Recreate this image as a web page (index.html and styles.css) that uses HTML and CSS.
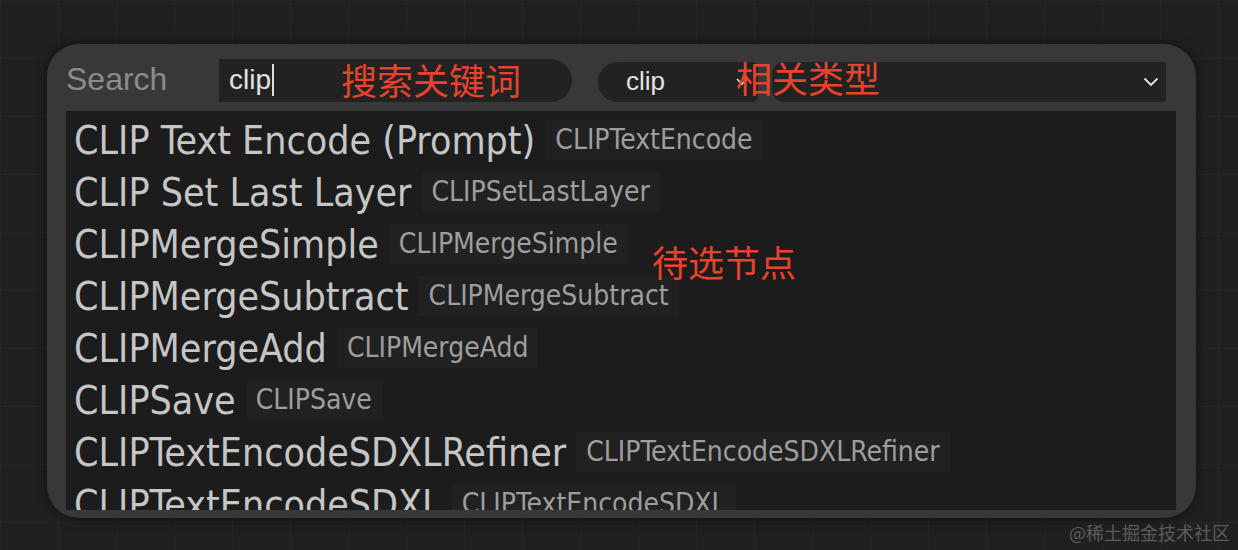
FILE: index.html
```html
<!DOCTYPE html>
<html lang="zh-CN">
<head>
    <meta charset="UTF-8">
    <title>Search</title>
    <link rel="stylesheet" href="styles.css">
</head>
<body>
    <div class="dialog">
        <div class="header">
            <span class="label">Search</span>
            <div class="input">
                <span class="value">clip</span><span class="caret"></span>
                <span class="note note-key">搜索关键词</span>
            </div>
            <div class="filter">
                <span class="value">clip</span>
                <svg class="mini" width="12" height="8" viewBox="0 0 12 8"><path d="M1 1l5 5 5-5" fill="none" stroke="#ddd" stroke-width="1.6"/></svg>
            </div>
            <div class="select">
                <svg width="16" height="10" viewBox="0 0 16 10"><path d="M1.5 1.5l6.5 6.5 6.5-6.5" fill="none" stroke="#e6e6e6" stroke-width="1.8"/></svg>
            </div>
            <span class="note note-type">相关类型</span>
        </div>
        <div class="list">
            <div class="item"><span class="name">CLIP Text Encode (Prompt)</span><span class="type">CLIPTextEncode</span></div>
            <div class="item"><span class="name">CLIP Set Last Layer</span><span class="type">CLIPSetLastLayer</span></div>
            <div class="item"><span class="name">CLIPMergeSimple</span><span class="type">CLIPMergeSimple</span></div>
            <div class="item"><span class="name">CLIPMergeSubtract</span><span class="type">CLIPMergeSubtract</span></div>
            <div class="item"><span class="name">CLIPMergeAdd</span><span class="type">CLIPMergeAdd</span></div>
            <div class="item"><span class="name">CLIPSave</span><span class="type">CLIPSave</span></div>
            <div class="item"><span class="name">CLIPTextEncodeSDXLRefiner</span><span class="type">CLIPTextEncodeSDXLRefiner</span></div>
            <div class="item"><span class="name">CLIPTextEncodeSDXL</span><span class="type">CLIPTextEncodeSDXL</span></div>
            <span class="note note-list">待选节点</span>
        </div>
    </div>
    <div class="mark">@稀土掘金技术社区</div>
</body>
</html>
```

FILE: styles.css
```css
body {
    margin: 0;
    width: 1238px;
    height: 550px;
    overflow: hidden;
    position: relative;
    font-family: "Liberation Sans", Arial, sans-serif;
    background-color: #202020;
    background-image:
        linear-gradient(90deg, rgba(255,255,255,0.025) 1px, transparent 1px),
        linear-gradient(rgba(255,255,255,0.025) 1px, transparent 1px);
    background-size: 58px 58px;
}
.dialog {
    position: absolute;
    left: 47px;
    top: 44px;
    width: 1149px;
    height: 474px;
    box-sizing: border-box;
    padding: 14px 20px 8px 19px;
    background: #383838;
    border-radius: 32px;
    box-shadow: 0 0 12px rgba(0, 0, 0, 0.6);
    display: flex;
    flex-direction: column;
}
.header {
    position: relative;
    display: flex;
    align-items: center;
    height: 44px;
    margin-bottom: 9px;
}
.label {
    width: 153px;
    font-size: 32px;
    color: #8c8c8c;
    margin-top: -1px;
}
.input {
    position: relative;
    width: 353px;
    height: 43px;
    background: #222;
    border-radius: 0 22px 22px 0;
    display: flex;
    align-items: center;
    padding-left: 10px;
    box-sizing: border-box;
}
.value {
    font-size: 28px;
    color: #e2e2e2;
}
.caret {
    display: inline-block;
    width: 2px;
    height: 32px;
    background: #ddd;
    margin-left: 1px;
}
.filter {
    margin-left: 26px;
    width: 160px;
    height: 40px;
    margin-top: 3px;
    background: #222;
    border-radius: 20px 6px 6px 20px;
    display: flex;
    align-items: center;
    justify-content: space-between;
    padding: 0 10px 0 28px;
    box-sizing: border-box;
}
.filter .value {
    font-size: 26px;
}
.select {
    margin-left: 14px;
    margin-right: 10px;
    flex: 1;
    height: 40px;
    margin-top: 3px;
    background: #222;
    border-radius: 12px 3px 3px 12px;
    display: flex;
    align-items: center;
    justify-content: flex-end;
    padding-right: 7px;
}
.note {
    position: absolute;
    color: #e8432c;
    font-family: "Noto Sans CJK SC", sans-serif;
    font-size: 36px;
    line-height: 1;
    white-space: nowrap;
}
.note-key {
    left: 122px;
    top: 2px;
}
.note-type {
    left: 670px;
    top: 1px;
}
.list {
    position: relative;
    flex: 1;
    background: #1c1c1c;
    overflow: hidden;
    padding: 3px 0 0 8px;
}
.item {
    display: flex;
    align-items: center;
    height: 52px;
    white-space: nowrap;
}
.name {
    font-family: "DejaVu Sans Condensed", "DejaVu Sans", sans-serif;
    font-stretch: condensed;
    font-size: 39px;
    color: #c6c6c6;
}
.type {
    margin-left: 10px;
    padding: 0 10px;
    height: 40px;
    line-height: 40px;
    background: #212121;
    font-family: "DejaVu Sans Condensed", "DejaVu Sans", sans-serif;
    font-stretch: condensed;
    font-size: 28px;
    color: #9e9e9e;
}
.note-list {
    left: 586px;
    top: 132px;
}
.mark {
    position: absolute;
    right: 8px;
    top: 519px;
    font-family: "Noto Sans CJK SC", sans-serif;
    font-size: 18px;
    color: #5c5c5c;
}
```
